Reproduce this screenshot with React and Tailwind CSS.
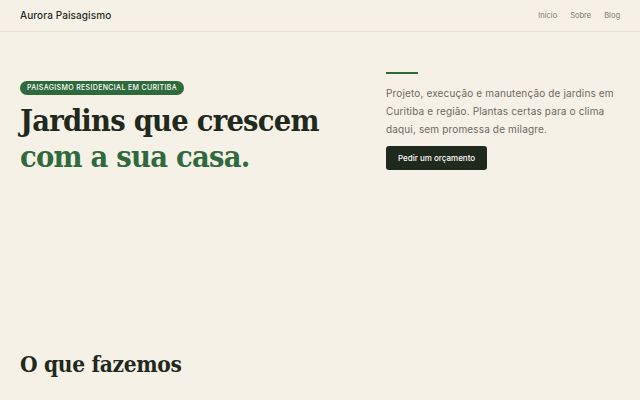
import React from 'react';

const serif = { fontFamily: '"DejaVu Serif", "Liberation Serif", serif', fontStretch: 'condensed' };

export default function App() {
  return (
    <div className="min-h-[400px] bg-[#f6f1e7] text-[#1f2a1d]" style={{ fontFamily: 'Inter, "Noto Sans", sans-serif' }}>
      <header className="h-[32px] flex items-center justify-between px-5 border-b border-[#ebe3d5]">
        <div className="text-[10px] font-medium tracking-[0.01em] text-[#1f2a1d]">Aurora Paisagismo</div>
        <nav className="flex items-center gap-[13px] text-[7.5px] text-[#7a786e]">
          <a>Início</a>
          <a>Sobre</a>
          <a>Blog</a>
        </nav>
      </header>

      <section className="flex px-5 pt-[40px]">
        <div className="w-[366px]">
          <span className="inline-block rounded-full bg-[#2f6a3c] px-[7px] py-[3px] text-[7px] font-medium uppercase tracking-[0.05em] text-white leading-[8px]">
            Paisagismo residencial em Curitiba
          </span>
          <h1 className="mt-[6px] text-[30.5px] font-bold leading-[36px] tracking-[-0.025em]" style={serif}>
            Jardins que crescem<br />
            <span className="text-[#2f6a3c]">com a sua casa.</span>
          </h1>
        </div>
        <div className="flex-1">
          <div className="h-[2px] w-[32px] bg-[#2f6a3c]" />
          <p className="mt-[10px] text-[10px] leading-[18px] text-[#6b6a5f] tracking-[0.015em]">
            Projeto, execução e manutenção de jardins em Curitiba e região. Plantas certas para o clima daqui, sem promessa de milagre.
          </p>
          <button className="mt-[8px] h-[24px] rounded-[3px] bg-[#1f2a1d] px-[12px] text-[8px] font-medium text-white">
            Pedir um orçamento
          </button>
        </div>
      </section>

      <section className="px-5 pt-[174px]">
        <h2 className="text-[22.5px] font-bold tracking-[-0.015em]" style={serif}>O que fazemos</h2>
      </section>
    </div>
  );
}
